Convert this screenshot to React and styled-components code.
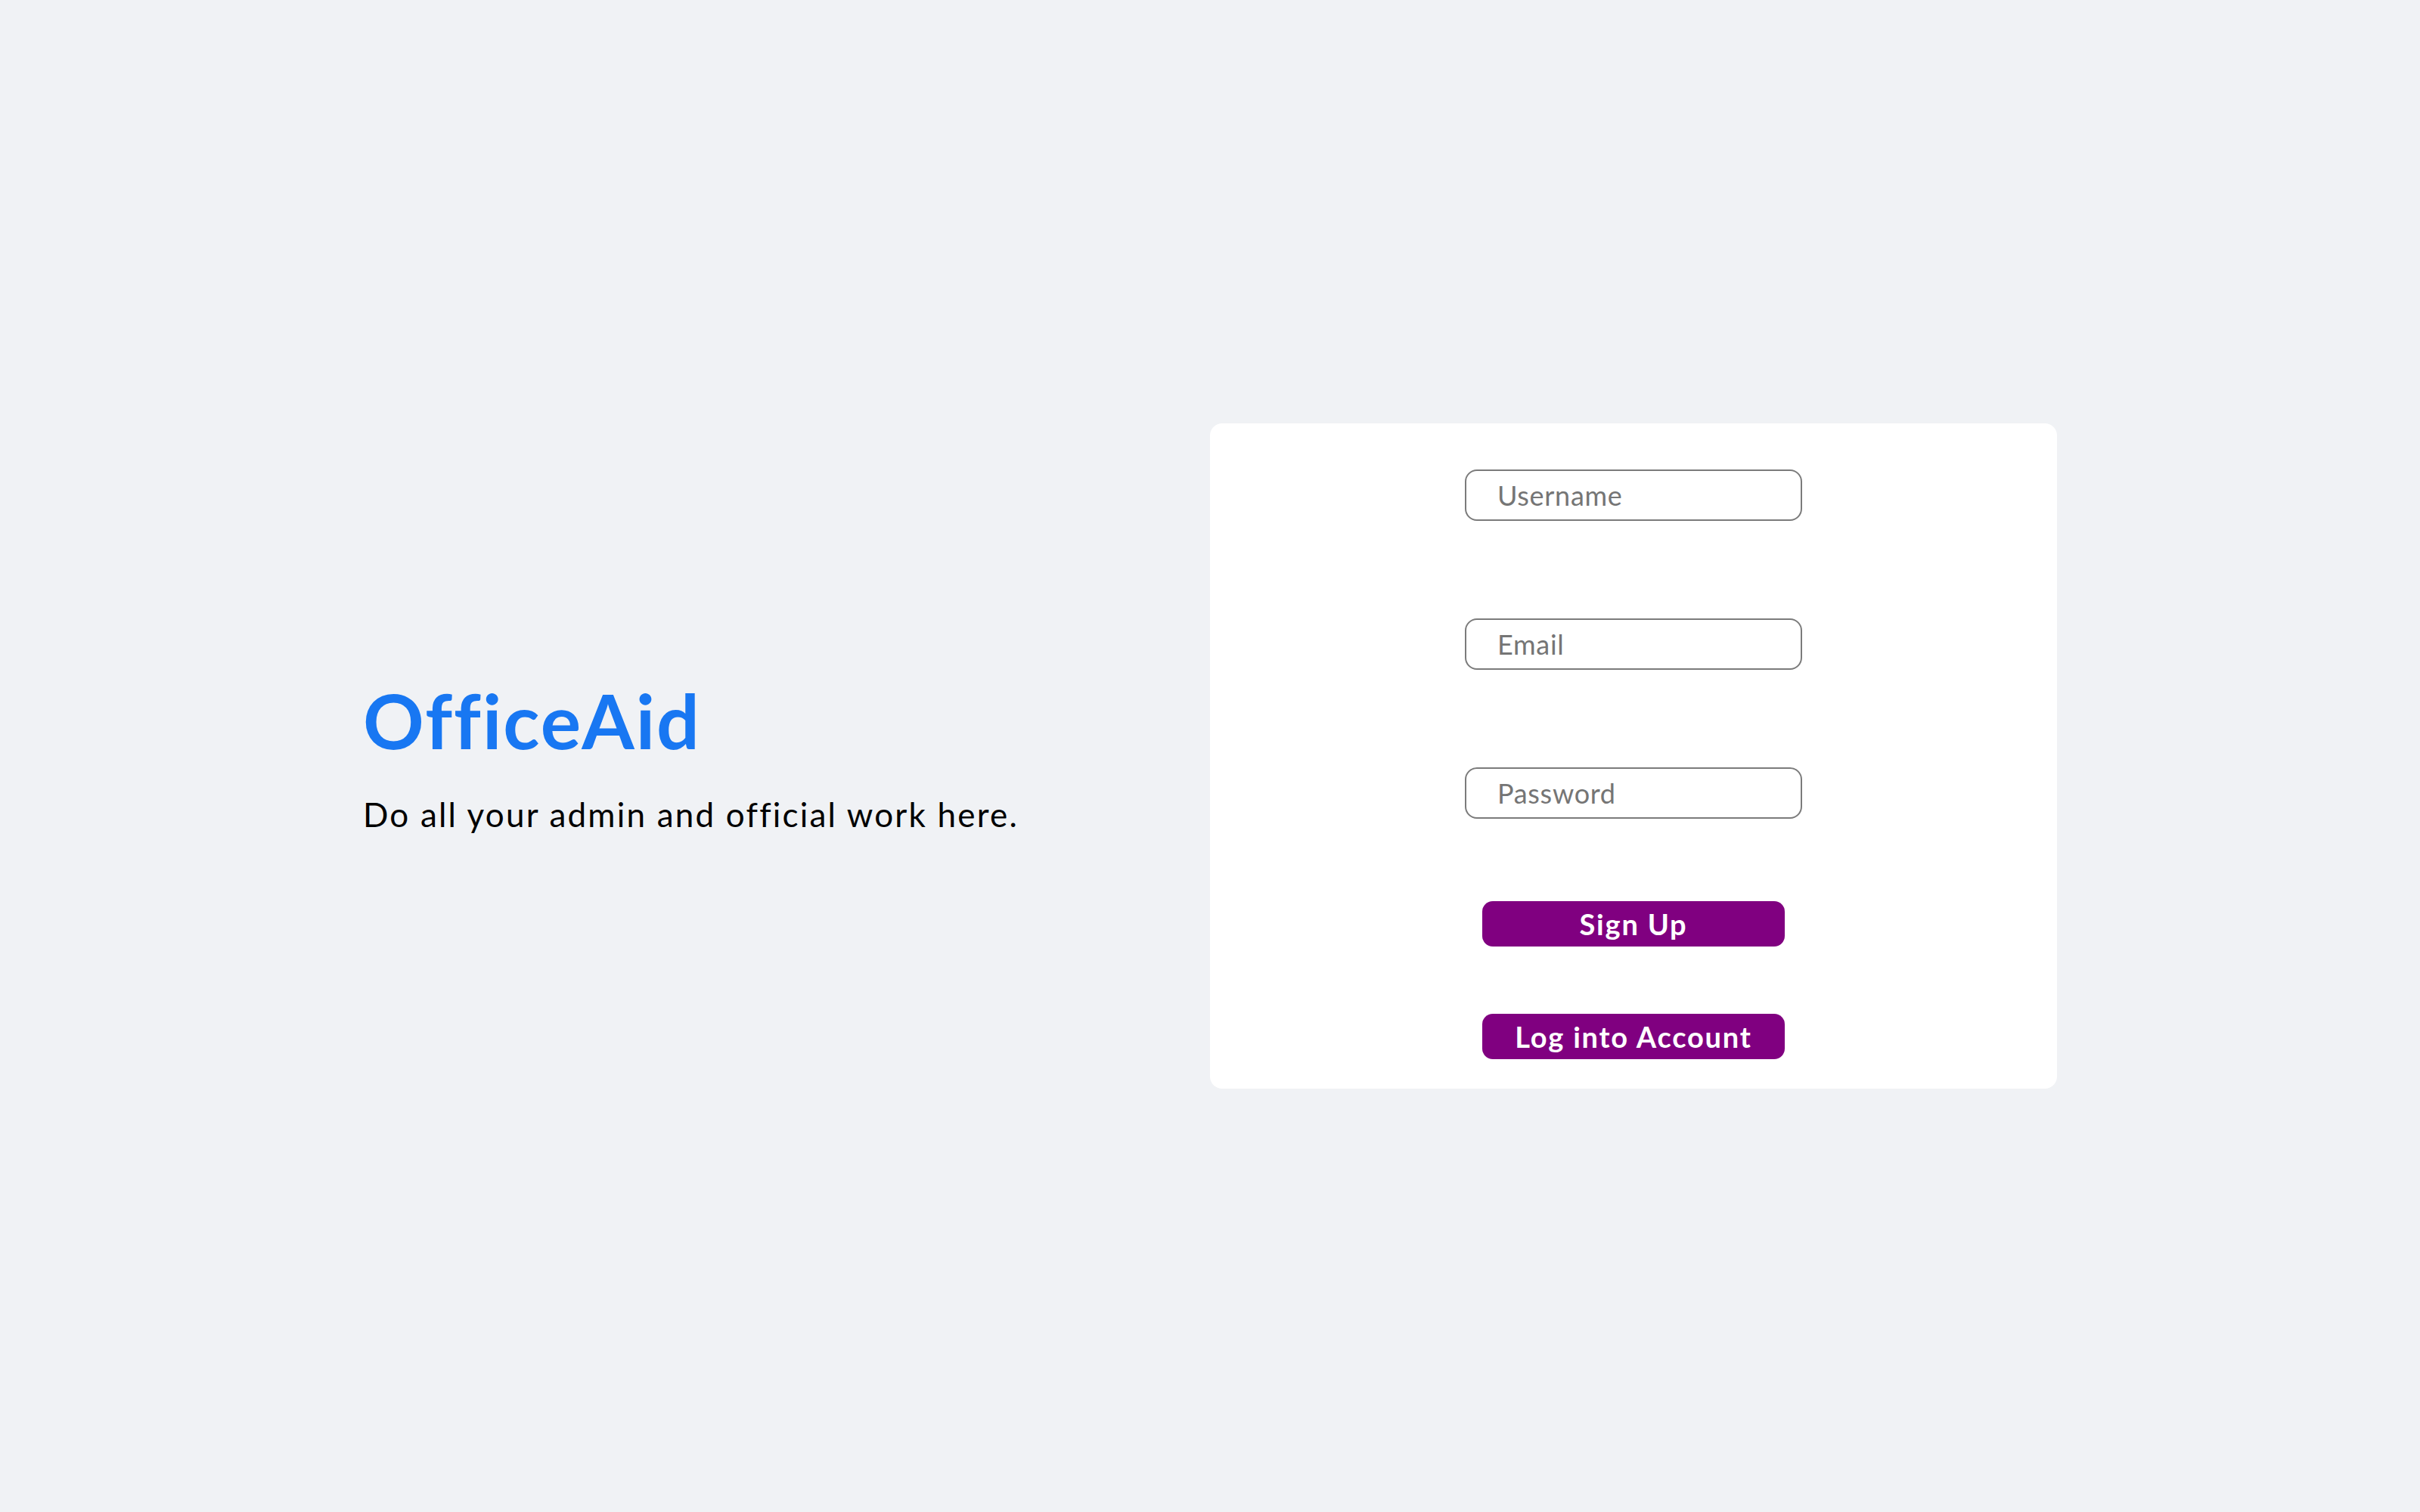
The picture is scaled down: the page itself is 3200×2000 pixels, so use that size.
import styled, { createGlobalStyle } from "styled-components";

const GlobalStyle = createGlobalStyle`
  * {
    box-sizing: border-box;
  }
  body {
    margin: 0;
    background-color: #f0f2f5;
    font-family: "Lato", "Noto Sans", sans-serif;
    font-variant-ligatures: none;
  }
`;

const App = () => {
  return (
    <Page>
      <GlobalStyle />
      <Container>
        <Intro>
          <h1>OfficeAid</h1>
          <p>Do all your admin and official work here.</p>
        </Intro>
        <Card>
          <Input type="text" placeholder="Username" />
          <Input type="email" placeholder="Email" />
          <Input type="password" placeholder="Password" />
          <Button space={109}>Sign Up</Button>
          <Button space={89}>Log into Account</Button>
        </Card>
      </Container>
    </Page>
  );
};

export default App;

const Page = styled.div`
  min-height: 100vh;
  display: flex;
  align-items: center;
`;

const Container = styled.div`
  width: 2240px;
  margin: 0 auto;
  display: flex;
  align-items: center;
  justify-content: space-between;
`;

const Intro = styled.div`
  display: flex;
  flex-direction: column;

  h1 {
    margin: 0;
    font-size: 100px;
    line-height: 1;
    font-weight: 700;
    letter-spacing: 2px;
    color: #1877f2;
  }

  p {
    margin: 53px 0 0;
    font-size: 44px;
    line-height: 1;
    letter-spacing: 2.2px;
    color: #000;
  }
`;

const Card = styled.div`
  width: 1120px;
  height: 880px;
  padding: 61px 0 39px;
  background-color: #fff;
  border-radius: 16px;
  display: flex;
  flex-direction: column;
  align-items: center;
`;

const Input = styled.input`
  width: 446px;
  height: 68px;
  padding: 0 0 0 41px;
  border: 2px solid #7b7b7b;
  border-radius: 16px;
  font-family: "Lato", "Noto Sans", sans-serif;
  font-size: 36px;
  letter-spacing: 0.7px;
  color: #333;
  outline: none;

  & + & {
    margin-top: 129px;
  }

  &::placeholder {
    color: #757575;
  }
`;

const Button = styled.button`
  width: 400px;
  height: 60px;
  margin-top: ${(p) => p.space}px;
  border: none;
  border-radius: 14px;
  background-color: #800080;
  color: #fff;
  font-family: "Lato", "Noto Sans", sans-serif;
  font-size: 38px;
  font-weight: 700;
  letter-spacing: 1.8px;
  cursor: pointer;
`;
